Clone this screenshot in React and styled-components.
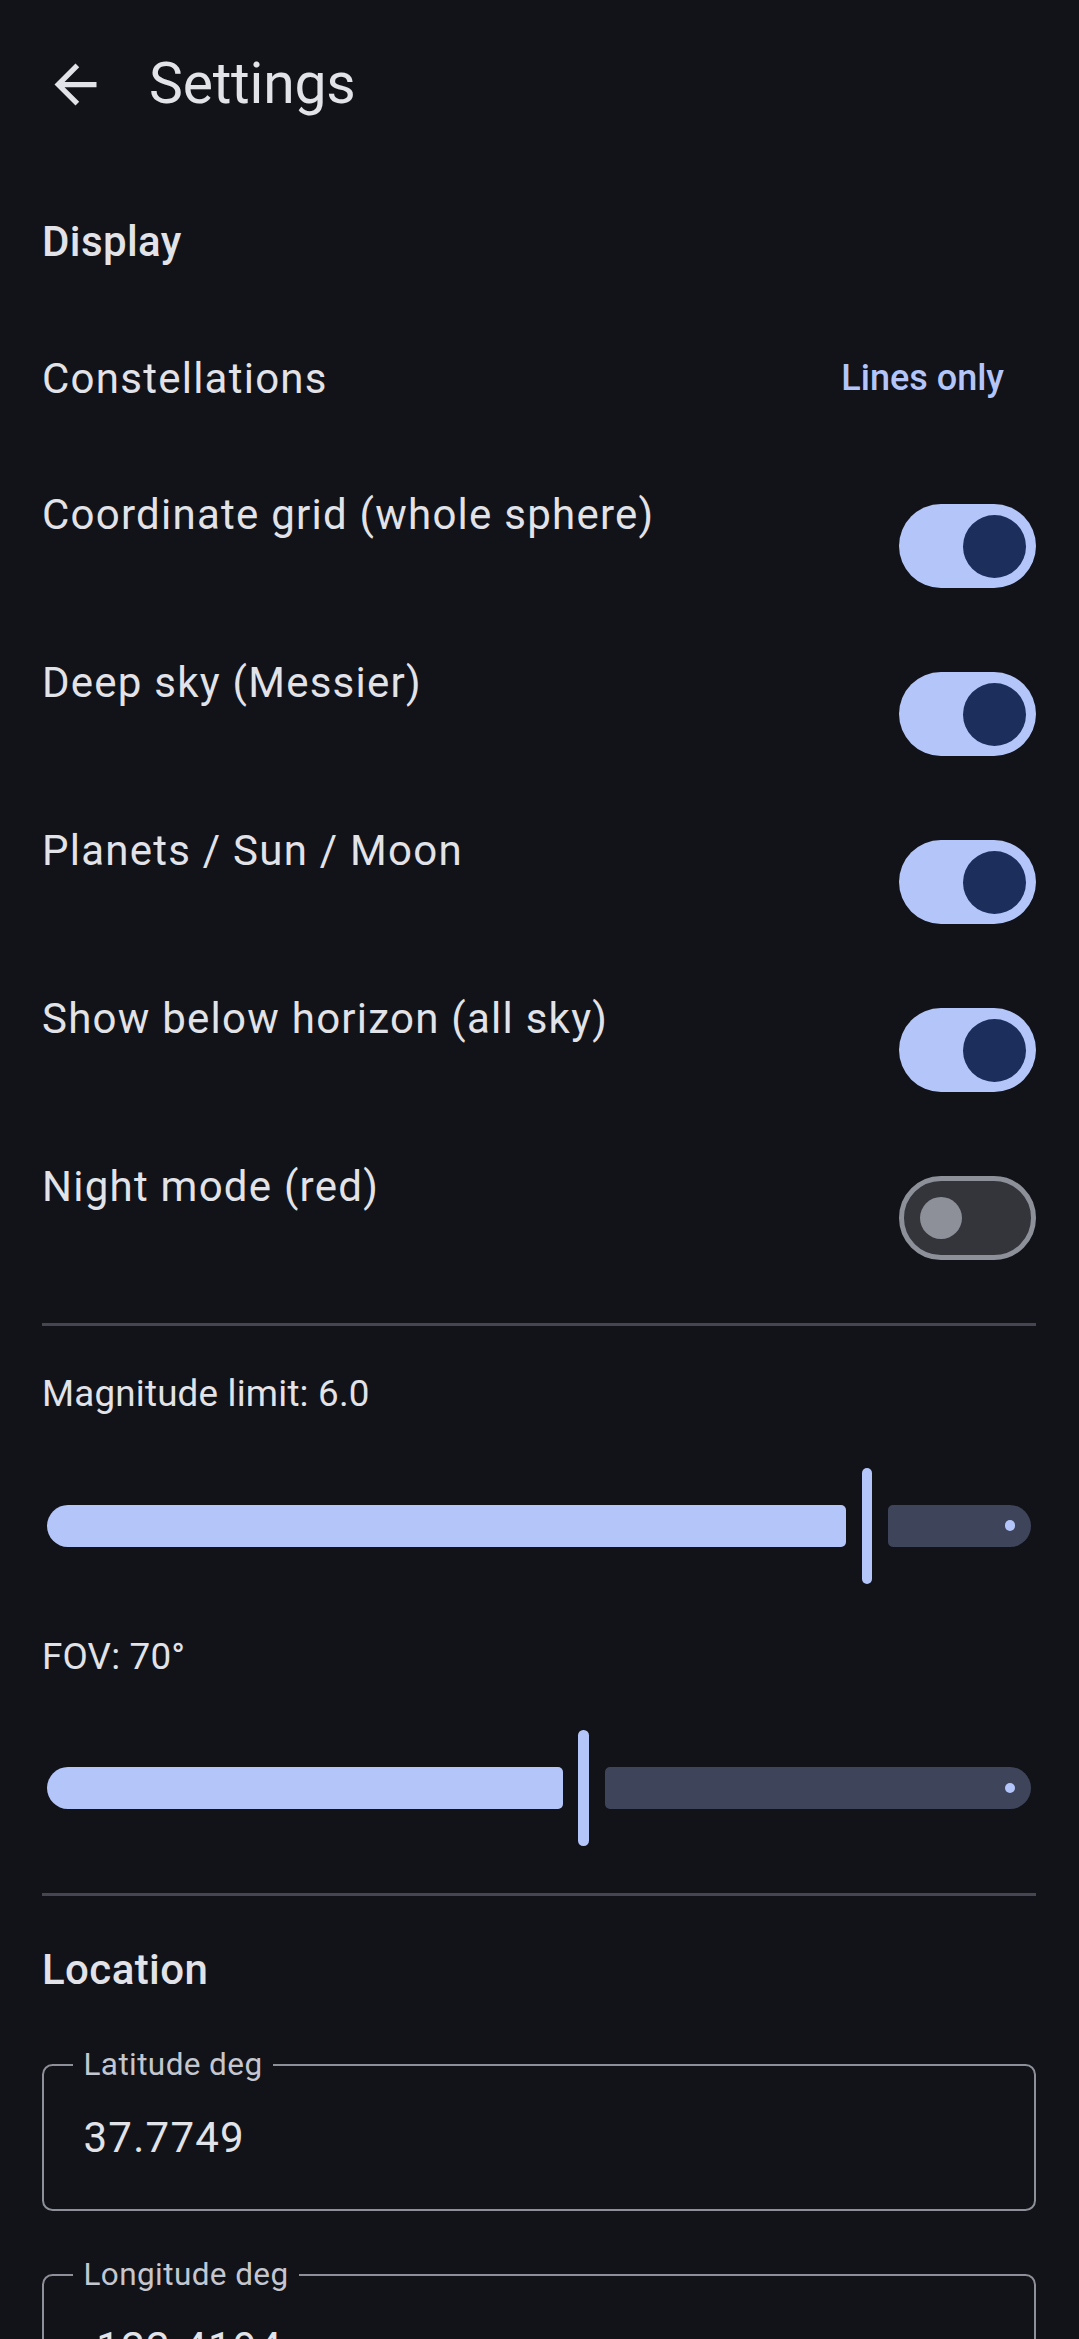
import React from "react";
import styled, { createGlobalStyle } from "styled-components";

const GlobalStyle = createGlobalStyle`
  html, body {
    margin: 0;
    padding: 0;
    background: #111318;
  }
  body {
    font-family: Roboto, "Noto Sans", sans-serif;
    color: #e2e2e9;
    -webkit-font-smoothing: antialiased;
  }
`;

const toggles = [
  { label: "Coordinate grid (whole sphere)", on: true },
  { label: "Deep sky (Messier)", on: true },
  { label: "Planets / Sun / Moon", on: true },
  { label: "Show below horizon (all sky)", on: true },
  { label: "Night mode (red)", on: false },
];

function ArrowBack() {
  return (
    <svg width="63" height="63" viewBox="0 0 24 24" fill="#e2e2e9">
      <path d="M20 11H7.83l5.59-5.59L12 4l-8 8 8 8 1.41-1.41L7.83 13H20v-2z" />
    </svg>
  );
}

function Switch({ on }) {
  return (
    <SwitchBox>
      <Track $on={on}>
        <Thumb $on={on} />
      </Track>
    </SwitchBox>
  );
}

function Slider({ fraction }) {
  return (
    <SliderBox>
      <ActiveTrack style={{ width: `calc(${fraction} * 100% - 21px)` }} />
      <SliderThumb />
      <InactiveTrack>
        <StopDot />
      </InactiveTrack>
    </SliderBox>
  );
}

function Field({ label, value }) {
  return (
    <FieldWrap>
      <FieldBox>
        <FieldLabel>{label}</FieldLabel>
        <FieldValue>{value}</FieldValue>
      </FieldBox>
    </FieldWrap>
  );
}

export default function App() {
  return (
    <>
      <GlobalStyle />
      <TopBar>
        <IconButton aria-label="Back">
          <ArrowBack />
        </IconButton>
        <Title>Settings</Title>
      </TopBar>
      <Content>
        <SectionTitle>Display</SectionTitle>
        <SelectRow>
          <RowLabel>Constellations</RowLabel>
          <TextButton>Lines only</TextButton>
        </SelectRow>
        {toggles.map((t) => (
          <ToggleRow key={t.label}>
            <RowLabel>{t.label}</RowLabel>
            <Switch on={t.on} />
          </ToggleRow>
        ))}
        <Divider />
        <SliderLabel>Magnitude limit: 6.0</SliderLabel>
        <Slider fraction={5 / 6} />
        <SliderLabel>FOV: 70°</SliderLabel>
        <Slider fraction={60 / 110} />
        <Divider />
        <SectionTitle>Location</SectionTitle>
        <Field label="Latitude deg" value="37.7749" />
        <Field label="Longitude deg" value="-122.4194" />
      </Content>
    </>
  );
}

const TopBar = styled.header`
  height: 168px;
  display: flex;
  align-items: center;
  padding-left: 12px;
`;

const IconButton = styled.button`
  width: 126px;
  height: 126px;
  border: none;
  background: transparent;
  padding: 0;
  display: flex;
  align-items: center;
  justify-content: center;
`;

const Title = styled.h1`
  margin: 0 0 0 11px;
  font-size: 57px;
  font-weight: 400;
  line-height: 74px;
  letter-spacing: -0.2px;
  color: #e2e2e9;
`;

const Content = styled.main`
  display: flex;
  flex-direction: column;
  gap: 42px;
  padding: 42px 43px 0 42px;
`;

const SectionTitle = styled.h2`
  margin: 0;
  font-size: 42px;
  font-weight: 500;
  line-height: 63px;
  letter-spacing: 0.4px;
  color: #e2e2e9;
`;

const SelectRow = styled.div`
  height: 126px;
  display: flex;
  align-items: center;
  justify-content: space-between;
`;

const ToggleRow = styled.div`
  height: 126px;
  display: flex;
  align-items: flex-start;
  justify-content: space-between;
`;

const RowLabel = styled.span`
  font-size: 42px;
  line-height: 63px;
  letter-spacing: 1.25px;
  color: #e2e2e9;
`;

const TextButton = styled.button`
  height: 105px;
  padding: 0 32px;
  border: none;
  border-radius: 53px;
  background: transparent;
  font-family: Roboto, sans-serif;
  font-size: 36px;
  font-weight: 500;
  letter-spacing: 0;
  color: #b4c5fa;
`;

const SwitchBox = styled.div`
  height: 126px;
  display: flex;
  align-items: center;
`;

const Track = styled.div`
  box-sizing: border-box;
  width: 137px;
  height: 84px;
  border-radius: 42px;
  display: flex;
  align-items: center;
  justify-content: ${(p) => (p.$on ? "flex-end" : "flex-start")};
  background: ${(p) => (p.$on ? "#b4c5fa" : "#33353b")};
  border: ${(p) => (p.$on ? "none" : "5.25px solid #8e9099")};
  padding: ${(p) => (p.$on ? "0 10.5px" : "0 15.75px")};
`;

const Thumb = styled.div`
  width: ${(p) => (p.$on ? "63px" : "42px")};
  height: ${(p) => (p.$on ? "63px" : "42px")};
  border-radius: 50%;
  background: ${(p) => (p.$on ? "#1c2e5b" : "#8e9099")};
`;

const Divider = styled.hr`
  margin: 0;
  border: none;
  height: 3px;
  background: #44474f;
`;

const SliderLabel = styled.div`
  font-size: 36.75px;
  line-height: 52.5px;
  letter-spacing: 0.2px;
  color: #e2e2e9;
`;

const SliderBox = styled.div`
  height: 126px;
  display: flex;
  align-items: center;
  padding: 0 5.25px;
`;

const ActiveTrack = styled.div`
  height: 42px;
  flex: none;
  background: #b4c5fa;
  border-radius: 21px 5px 5px 21px;
`;

const SliderThumb = styled.div`
  flex: none;
  width: 10.5px;
  height: 116px;
  margin: 0 15.75px;
  border-radius: 5.25px;
  background: #b4c5fa;
`;

const InactiveTrack = styled.div`
  flex: 1;
  height: 42px;
  background: #3e4459;
  border-radius: 5px 21px 21px 5px;
  display: flex;
  align-items: center;
  justify-content: flex-end;
  padding-right: 15.75px;
`;

const StopDot = styled.div`
  width: 10.5px;
  height: 10.5px;
  border-radius: 50%;
  background: #b4c5fa;
`;

const FieldWrap = styled.div`
  padding-top: 21px;
`;

const FieldBox = styled.div`
  position: relative;
  box-sizing: border-box;
  height: 147px;
  border: 2.625px solid #8e9099;
  border-radius: 10.5px;
  display: flex;
  align-items: center;
  padding: 0 39.5px;
`;

const FieldLabel = styled.span`
  position: absolute;
  top: -1.3px;
  left: 29px;
  transform: translateY(-50%);
  padding: 0 10.5px;
  background: #111318;
  font-size: 31.5px;
  line-height: 42px;
  letter-spacing: 0.4px;
  color: #c4c6d0;
`;

const FieldValue = styled.span`
  font-size: 42px;
  line-height: 63px;
  letter-spacing: 1.25px;
  color: #e2e2e9;
`;
